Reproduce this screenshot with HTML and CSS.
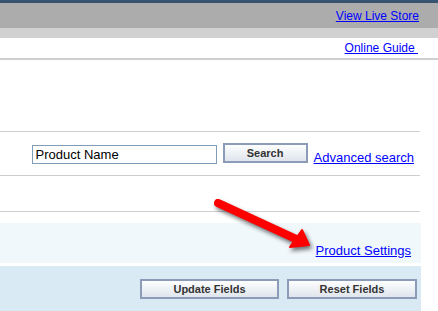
FILE: index.html
```html
<!DOCTYPE html>
<html lang="en">
<head>
    <meta charset="UTF-8">
    <title>Products</title>
    <link rel="stylesheet" href="styles.css">
</head>
<body>
    <div class="page">
        <div class="topbar"><a href="#">View Live Store</a></div>
        <div class="subbar"></div>
        <div class="guide"><a href="#">Online Guide&nbsp;</a></div>

        <div class="content">
            <div class="blank"></div>
            <div class="search-row">
                <input class="search-box" type="text" value="Product Name">
                <button class="btn btn-search">Search</button>
                <a class="adv-link" href="#">Advanced search</a>
            </div>
            <div class="spacer"></div>
            <div class="settings-row"><a href="#">Product Settings</a></div>
            <div class="actions">
                <button class="btn btn-update">Update Fields</button>
                <button class="btn btn-reset">Reset Fields</button>
            </div>
        </div>

        <!-- annotation arrow -->
        <svg class="arrow" width="115" height="70" viewBox="0 0 115 70">
            <line x1="13" y1="13" x2="91" y2="49" stroke="#f00" stroke-width="8" stroke-linecap="round"/>
            <polygon points="104,55 97,40 85,57" fill="#f00" stroke="#f00" stroke-width="2" stroke-linejoin="round"/>
        </svg>
    </div>
</body>
</html>
```

FILE: styles.css
```css
body { margin: 0; font-family: "Liberation Sans", Arial, sans-serif; background: #fff; }
a { color: #00f; }
.page { position: relative; }

.topbar { border-top: 3px solid #36536f; background: #acacac; height: 28px; box-sizing: border-box; padding: 6px 19px 0 0; text-align: right; font-size: 12px; line-height: 14px; }
.subbar { background: #d1d1d1; height: 10px; }
.guide { height: 22px; box-sizing: border-box; padding: 3px 20px 0 0; text-align: right; font-size: 12px; line-height: 14px; border-bottom: 2px solid #cfcfcf; }

.content { width: 421px; }
.blank { height: 71px; border-bottom: 1px solid #cecece; width: 420px; }
.search-row { display: flex; justify-content: flex-end; align-items: flex-start; gap: 6px; height: 44px; box-sizing: border-box; padding: 11px 6px 0 0; border-bottom: 1px solid #cecece; width: 420px; }
.search-box { width: 185px; height: 19px; box-sizing: border-box; margin: 2px 0 0; border: 1px solid #7f9db9; padding: 0 3px; font: 13px "Liberation Sans", Arial, sans-serif; color: #000; outline: none; }
.adv-link { font-size: 13px; line-height: 15px; margin-top: 7px; }
.spacer { height: 35px; border-bottom: 1px solid #cecece; width: 420px; margin-bottom: 11px; }

.settings-row { background: #f0f8fc; height: 40px; box-sizing: border-box; padding: 20px 10px 0 0; text-align: right; font-size: 13px; line-height: 15px; margin-bottom: 3px; }
.actions { background: #d9eaf4; height: 46px; box-sizing: border-box; padding: 13px 4px 0 0; display: flex; justify-content: flex-end; gap: 8px; }

.btn { height: 20px; box-sizing: border-box; border: 2px solid #8c9cb8; background: linear-gradient(#fdfefe, #dfe5ec); font: bold 11px "Liberation Sans", Arial, sans-serif; color: #333; padding: 0; margin: 0; }
.btn-search { width: 85px; }
.btn-update { width: 139px; }
.btn-reset { width: 130px; }

.arrow { position: absolute; left: 205px; top: 190px; filter: drop-shadow(2px 3px 2px rgba(0, 0, 0, 0.55)); }
```
